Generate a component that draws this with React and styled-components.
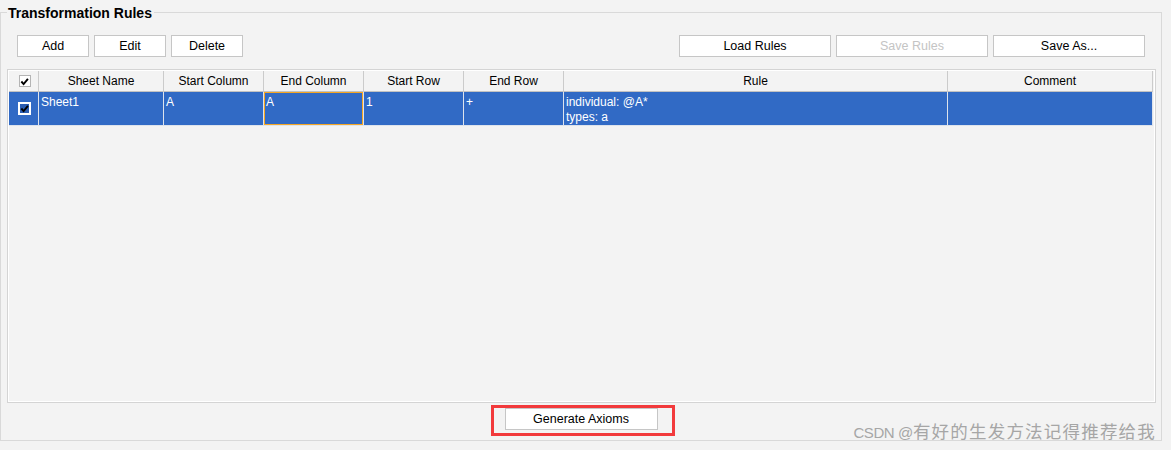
import React from "react";
import styled, { createGlobalStyle } from "styled-components";

const Global = createGlobalStyle`
  html, body { margin: 0; padding: 0; background: #f3f3f3; }
  body { font-family: "Liberation Sans", Arial, sans-serif; color: #000; }
  * { box-sizing: border-box; }
`;

const Page = styled.div`
  position: relative;
  width: 1171px;
  height: 450px;
  padding-top: 3px;
  overflow: hidden;
`;

const Group = styled.fieldset`
  margin: 0;
  width: 1162px;
  min-width: 0;
  border: 1px solid #d9d9d9;
  padding: 0 5px 4px 6px;
  display: flex;
  flex-direction: column;
`;

const Legend = styled.legend`
  padding: 2px 2px 0 1px;
  font-size: 14px;
  line-height: 16px;
  font-weight: bold;
`;

const Toolbar = styled.div`
  margin-top: 14px;
  padding: 0 11px 0 10px;
  display: flex;
  justify-content: space-between;
`;

const ButtonGroup = styled.div`
  display: flex;
  gap: 5px;
`;

const Button = styled.button`
  width: ${(p) => p.$w}px;
  height: 22px;
  padding: 0;
  background: #fff;
  border: 1px solid #c6c6c6;
  border-radius: 0;
  font-family: "Liberation Sans", Arial, sans-serif;
  font-size: 12.5px;
  color: ${(p) => (p.disabled ? "#c4c4c4" : "#000")};
  line-height: 20px;
`;

const TableFrame = styled.div`
  margin-top: 12px;
  height: 334px;
  border: 1px solid #d4d4d4;
  padding: 1px 1px 1px 1px;
  background: #fff;
`;

const Viewport = styled.div`
  height: 100%;
  background: #f3f3f3;
`;

const Grid = styled.div`
  display: grid;
  grid-template-columns: 30px 125px 100px 100px 100px 100px 384px 205px;
`;

const HeadCell = styled.div`
  height: 21px;
  border-right: 1px solid #cbcbcb;
  border-bottom: 1px solid #c2c2c2;
  display: flex;
  align-items: center;
  justify-content: center;
  font-size: 12px;
  background: #f3f3f3;
`;

const Cell = styled.div`
  height: 34px;
  border-right: 1px solid #dde3ec;
  border-bottom: 1px solid #dde3ec;
  background: #316ac5;
  color: #fff;
  font-size: 12px;
  line-height: 15px;
  padding: ${(p) => (p.$center ? "0" : "3px 2px 0 2px")};
  white-space: pre-line;
  display: flex;
  align-items: ${(p) => (p.$center ? "center" : "flex-start")};
  justify-content: ${(p) => (p.$center ? "center" : "flex-start")};
  box-shadow: ${(p) => (p.$focus ? "inset 0 0 0 1px #f5a623" : "none")};
`;

const Box = styled.span`
  width: ${(p) => (p.$selected ? 13 : 12)}px;
  height: ${(p) => (p.$selected ? 13 : 12)}px;
  display: inline-flex;
  align-items: center;
  justify-content: center;
  background: ${(p) => (p.$selected ? "#2a5cb0" : "#fff")};
  border: ${(p) => (p.$selected ? "2px solid #fff" : "1px solid #b4b4b4")};
  margin-left: 2px;
`;

const Check = ({ selected }) => (
  <Box $selected={selected}>
    <svg width="9" height="9" viewBox="0 0 10 10">
      <path d="M1.5 5 L4 7.8 L8.8 2" fill="none" stroke="#000" strokeWidth="2.1" />
    </svg>
  </Box>
);

const Footer = styled.div`
  margin-top: 2px;
  display: flex;
  justify-content: center;
`;

const Highlight = styled.div`
  border: 3px solid #f23a3c;
  padding: 0 14px 3px 11px;
  margin-left: 2px;
`;

const Watermark = styled.div`
  position: absolute;
  right: 15px;
  top: 421px;
  color: #a6a6a6;
  font-family: "Noto Sans CJK SC", sans-serif;
  font-size: 17.5px;
  line-height: 20px;
  letter-spacing: 1.2px;
  white-space: nowrap;
`;

const Latin = styled.span`
  font-family: "Liberation Sans", Arial, sans-serif;
  font-size: 15px;
  letter-spacing: -0.4px;
`;

const columns = ["", "Sheet Name", "Start Column", "End Column", "Start Row", "End Row", "Rule", "Comment"];
const row = ["Sheet1", "A", "A", "1", "+", "individual: @A*\ntypes: a", ""];

export default function App() {
  return (
    <>
      <Global />
      <Page>
        <Group>
          <Legend>Transformation Rules</Legend>
          <Toolbar>
            <ButtonGroup>
              <Button $w={72}>Add</Button>
              <Button $w={72}>Edit</Button>
              <Button $w={72}>Delete</Button>
            </ButtonGroup>
            <ButtonGroup>
              <Button $w={152}>Load Rules</Button>
              <Button $w={152} disabled>Save Rules</Button>
              <Button $w={152}>Save As...</Button>
            </ButtonGroup>
          </Toolbar>
          <TableFrame>
            <Viewport>
              <Grid>
                {columns.map((c, i) => (
                  <HeadCell key={i}>{i === 0 ? <Check /> : c}</HeadCell>
                ))}
                <Cell $center>
                  <Check selected />
                </Cell>
                {row.map((v, i) => (
                  <Cell key={i} $focus={i === 2}>{v}</Cell>
                ))}
              </Grid>
            </Viewport>
          </TableFrame>
          <Footer>
            <Highlight>
              <Button $w={153}>Generate Axioms</Button>
            </Highlight>
          </Footer>
        </Group>
        <Watermark>
          <Latin>CSDN @</Latin>有好的生发方法记得推荐给我
        </Watermark>
      </Page>
    </>
  );
}
